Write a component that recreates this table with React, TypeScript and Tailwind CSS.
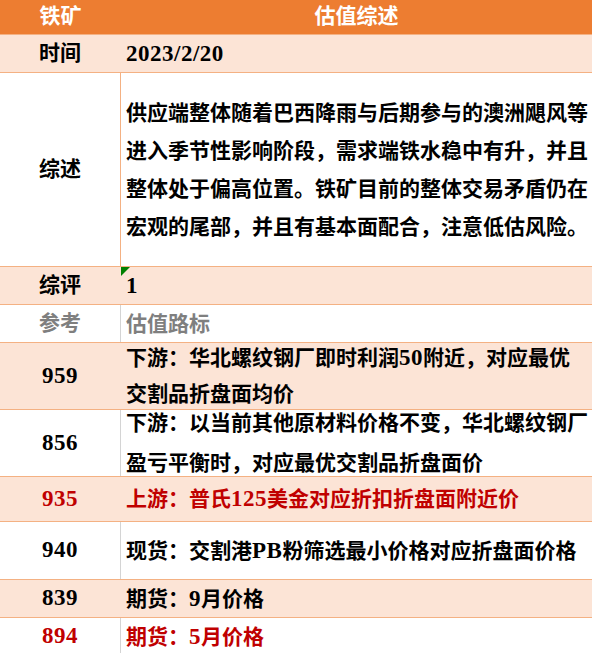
import React from "react";

type Row = {
  label: string;
  text: string[];
  h: string;
  bg: "peach" | "white";
  tone?: "red" | "gray";
  leading?: string;
  mark?: boolean;
};

const rows: Row[] = [
  { label: "时间", text: ["2023/2/20"], h: "h-[38px]", bg: "peach" },
  {
    label: "综述",
    text: [
      "供应端整体随着巴西降雨与后期参与的澳洲飓风等",
      "进入季节性影响阶段，需求端铁水稳中有升，并且",
      "整体处于偏高位置。铁矿目前的整体交易矛盾仍在",
      "宏观的尾部，并且有基本面配合，注意低估风险。",
    ],
    h: "h-[194px]",
    bg: "white",
    leading: "leading-[38px]",
  },
  { label: "综评", text: ["1"], h: "h-[38px]", bg: "peach", mark: true },
  { label: "参考", text: ["估值路标"], h: "h-[38px]", bg: "white", tone: "gray" },
  {
    label: "959",
    text: ["下游：华北螺纹钢厂即时利润50附近，对应最优", "交割品折盘面均价"],
    h: "h-[67px]",
    bg: "peach",
    leading: "leading-[36px]",
  },
  {
    label: "856",
    text: ["下游：以当前其他原材料价格不变，华北螺纹钢厂", "盈亏平衡时，对应最优交割品折盘面价"],
    h: "h-[67px]",
    bg: "white",
    leading: "leading-[40px]",
  },
  { label: "935", text: ["上游：普氏125美金对应折扣折盘面附近价"], h: "h-[45px]", bg: "peach", tone: "red" },
  { label: "940", text: ["现货：交割港PB粉筛选最小价格对应折盘面价格"], h: "h-[58px]", bg: "white" },
  { label: "839", text: ["期货：9月价格"], h: "h-[38px]", bg: "peach" },
  { label: "894", text: ["期货：5月价格"], h: "h-[38px]", bg: "white", tone: "red" },
];

// latin runs (digits, PB, dates) are set a bit larger, like the sheet's serif digits
const Mixed = ({ s }: { s: string }) => (
  <>
    {s.split(/([A-Za-z0-9/.]+)/).map((part, i) =>
      /^[A-Za-z0-9/.]+$/.test(part) ? (
        <span key={i} className="text-[23px] tracking-[0.5px]">
          {part}
        </span>
      ) : (
        <React.Fragment key={i}>{part}</React.Fragment>
      )
    )}
  </>
);

export default function App() {
  return (
    <div className="w-[592px] overflow-hidden bg-white font-['Liberation_Serif','Noto_Sans_CJK_SC',serif] text-[21px] font-bold text-black">
      <div className="flex h-[34px] items-center bg-[#ED7D31] text-white">
        <div className="w-[121px] text-center">铁矿</div>
        <div className="flex-1 text-center">估值综述</div>
      </div>
      {rows.map((r) => {
        const color =
          r.tone === "red" ? "text-[#C00000]" : r.tone === "gray" ? "text-[#7F7F7F]" : "text-black";
        const bg = r.bg === "peach" ? "bg-[#FCE4D6]" : "bg-white";
        const divider =
          r.bg === "peach"
            ? "border-[#FCE4D6]"
            : r.label === "综述"
              ? "border-[#F4B183]"
              : "border-[#D4D4D4]";
        return (
          <div key={r.label} className={`flex ${r.h} ${bg} border-t border-[#F4B183] ${color}`}>
            <div className={`flex w-[121px] shrink-0 items-center justify-center border-r ${divider}`}>
              <Mixed s={r.label} />
            </div>
            <div className={`relative flex flex-1 flex-col justify-center pl-[5px] ${r.leading ?? "leading-[26px]"}`}>
              {r.mark && (
                <span className="absolute left-0 top-0 h-0 w-0 border-r-[9px] border-t-[9px] border-r-transparent border-t-[#008000]" />
              )}
              {r.text.map((t) => (
                <div key={t} className="whitespace-nowrap">
                  <Mixed s={t} />
                </div>
              ))}
            </div>
          </div>
        );
      })}
    </div>
  );
}
